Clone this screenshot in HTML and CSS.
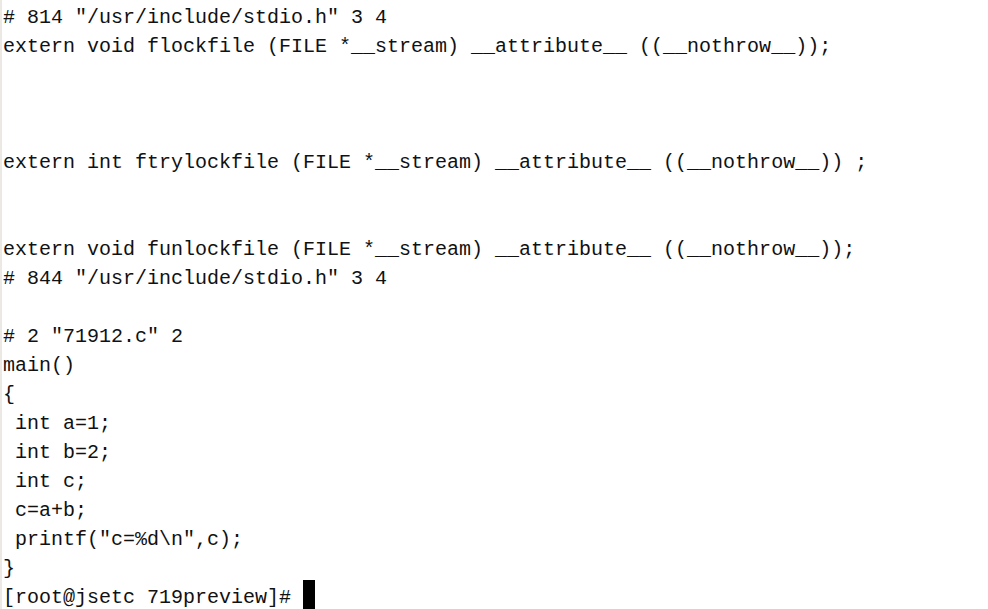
FILE: index.html
```html
<!DOCTYPE html>
<html>
<head>
<meta charset="utf-8">
<link rel="stylesheet" href="styles.css">
</head>
<body>
<pre class="term"># 814 "/usr/include/stdio.h" 3 4
extern void flockfile (FILE *__stream) __attribute__ ((__nothrow__));



extern int ftrylockfile (FILE *__stream) __attribute__ ((__nothrow__)) ;


extern void funlockfile (FILE *__stream) __attribute__ ((__nothrow__));
# 844 "/usr/include/stdio.h" 3 4

# 2 "71912.c" 2
main()
{
 int a=1;
 int b=2;
 int c;
 c=a+b;
 printf("c=%d\n",c);
}
[root@jsetc 719preview]# <span class="cursor"></span></pre>
</body>
</html>
```
FILE: styles.css
```css
html, body {
  margin: 0;
  padding: 0;
  background: #ffffff;
  height: 100%;
  overflow: hidden;
}
body {
  border-left: 2px solid #ece9e5;
}
.term {
  margin: 0;
  padding: 3px 0 0 1px;
  font-family: "Liberation Mono", "Courier New", monospace;
  font-size: 20px;
  line-height: 29px;
  color: #111111;
  white-space: pre;
}
.cursor {
  display: inline-block;
  width: 12px;
  height: 29px;
  margin-top: -3px;
  background: #000000;
  vertical-align: top;
}
```
